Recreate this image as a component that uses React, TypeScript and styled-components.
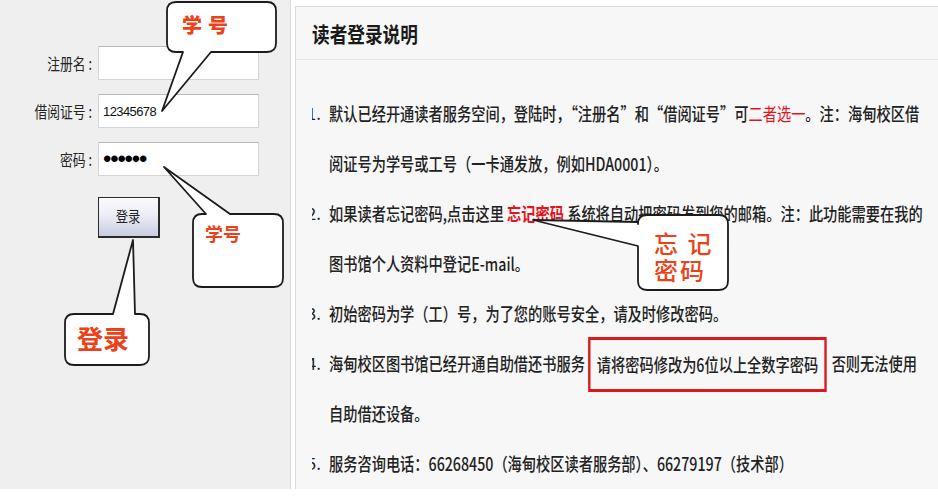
import React from 'react';
import styled, { createGlobalStyle, css } from 'styled-components';

const GlobalStyle = createGlobalStyle`
  html, body {
    margin: 0;
    padding: 0;
    background: #fff;
  }
  body {
    font-family: "Noto Sans CJK SC", "Noto Sans", sans-serif;
    color: #222;
  }
  * {
    box-sizing: border-box;
  }
`;

// the screenshot text is narrow and tall, so squeeze it a bit
const narrow = (origin: string, amount = 0.8) => css`
  display: inline-block;
  transform: scaleX(${amount});
  transform-origin: ${origin} center;
  white-space: nowrap;
`;

const Page = styled.div`
  position: relative;
  display: flex;
  align-items: flex-start;
  width: 938px;
  height: 496px;
  overflow: hidden;
  background: #fff;
`;

const LoginPanel = styled.div`
  flex: none;
  display: flex;
  flex-direction: column;
  width: 291px;
  height: 489px;
  padding-top: 46px;
  background: #efefef;
  border-right: 1px solid #dcdcdc;
`;

const Row = styled.div`
  display: grid;
  grid-template-columns: 92px 161px;
  column-gap: 6px;
  align-items: center;
  height: 34px;
  margin-bottom: 14px;
`;

const Label = styled.label`
  justify-self: end;
  font-size: 16px;
  color: #222;
  ${narrow('right', 0.8)}
`;

const Field = styled.input`
  width: 161px;
  height: 34px;
  padding: 0 4px;
  border: 1px solid #d4d4d4;
  border-top-color: #b8b8b8;
  background: #fff;
  font-family: "Liberation Sans", Arial, sans-serif;
  font-size: 13px;
  color: #111;
  outline: none;
  letter-spacing: -0.6px;

  &[type='password'] {
    font-size: 24px;
    letter-spacing: -1.2px;
    color: #000;
  }
`;

const ButtonRow = styled.div`
  display: flex;
  padding-left: 98px;
  margin-top: 7px;
`;

const LoginButton = styled.button`
  width: 62px;
  height: 41px;
  padding: 0 0 4px;
  border: 1px solid #2b2b2b;
  border-right-width: 2px;
  border-bottom-width: 2px;
  background: linear-gradient(#fbfbfd, #eceef5 45%, #c9cde0);
  font-family: "Noto Sans CJK SC", sans-serif;
  font-size: 15px;
  color: #222;

  span {
    ${narrow('center', 0.82)}
  }
`;

const Guide = styled.div`
  flex: 1;
  min-width: 0;
  height: 483px;
  margin: 6px 0 0 4px;
  overflow: hidden;
  background: #f7f7f7;
  border-top: 1px solid #dadada;
  border-left: 1px solid #dadada;
`;

const GuideHeader = styled.div`
  display: flex;
  align-items: center;
  height: 53px;
  padding-left: 16px;
  border-bottom: 1px solid #e6e6e6;
`;

const Title = styled.h2`
  margin: 0;
  font-size: 21px;
  font-weight: 700;
  color: #1a1a1a;
  ${narrow('left', 0.84)}
`;

const List = styled.ol`
  margin: 0;
  padding: 28px 0 0 16px;
  list-style: none;
`;

const Item = styled.li`
  display: flex;
  align-items: flex-start;
`;

const Marker = styled.span`
  flex: none;
  display: flex;
  justify-content: flex-end;
  width: 9px;
  height: 50px;
  margin-right: 8px;
  overflow: hidden;
  font-size: 17px;
  line-height: 50px;
  color: #222;
`;

const Lines = styled.div`
  display: flex;
  flex-direction: column;
`;

const Line = styled.div`
  height: 50px;
  font-size: 18px;
  font-weight: 500;
  line-height: 50px;
  color: #222;
  ${narrow('left', 0.79)}
`;

const Red = styled.span<{ $bold?: boolean }>`
  color: #e3141a;
  font-weight: ${(p) => (p.$bold ? 700 : 400)};
`;

const Boxed = styled.span`
  display: inline-block;
  height: 55px;
  margin: -1px 6px 0 4px;
  padding: 0 8px;
  border: 3px solid #d91a1f;
  line-height: 49px;
  vertical-align: top;
`;

/* ---------- callouts ---------- */

type Box = { x: number; y: number; w: number; h: number };
type Tail = { side: 'top' | 'bottom' | 'left'; a: number; b: number; tx: number; ty: number };

function bubblePath(box: Box, tail: Tail, ox: number, oy: number) {
  const r = 9;
  const x = box.x - ox;
  const y = box.y - oy;
  const { w, h } = box;
  const tx = tail.tx - ox;
  const ty = tail.ty - oy;
  const a = tail.side === 'left' ? tail.a - oy : tail.a - ox;
  const b = tail.side === 'left' ? tail.b - oy : tail.b - ox;

  let d = `M ${x + r} ${y} `;
  if (tail.side === 'top') d += `H ${a} L ${tx} ${ty} L ${b} ${y} `;
  d += `H ${x + w - r} Q ${x + w} ${y} ${x + w} ${y + r} V ${y + h - r} Q ${x + w} ${y + h} ${x + w - r} ${y + h} `;
  if (tail.side === 'bottom') d += `H ${b} L ${tx} ${ty} L ${a} ${y + h} `;
  d += `H ${x + r} Q ${x} ${y + h} ${x} ${y + h - r} `;
  if (tail.side === 'left') d += `V ${b} L ${tx} ${ty} L ${x} ${a} `;
  d += `V ${y + r} Q ${x} ${y} ${x + r} ${y} Z`;
  return d;
}

const Bubble = styled.div`
  position: absolute;
  pointer-events: none;

  svg {
    position: absolute;
    left: 0;
    top: 0;
    overflow: visible;
  }
`;

const BubbleText = styled.div<{ $size: number; $weight: number; $spacing?: number }>`
  position: absolute;
  font-family: "Noto Sans CJK SC", sans-serif;
  font-size: ${(p) => p.$size}px;
  font-weight: ${(p) => p.$weight};
  letter-spacing: ${(p) => p.$spacing ?? 0}px;
  line-height: ${(p) => Math.round(p.$size * 1.12)}px;
  color: #ec421a;
  white-space: nowrap;
`;

type CalloutProps = {
  box: Box;
  tail: Tail;
  textAt: [number, number];
  size: number;
  weight: number;
  spacing?: number;
  children: React.ReactNode;
};

const Callout: React.FC<CalloutProps> = ({ box, tail, textAt, size, weight, spacing, children }) => {
  const left = Math.min(box.x, tail.tx) - 2;
  const top = Math.min(box.y, tail.ty) - 2;
  const right = Math.max(box.x + box.w, tail.tx) + 2;
  const bottom = Math.max(box.y + box.h, tail.ty) + 2;
  const width = right - left;
  const height = bottom - top;

  return (
    <Bubble style={{ left, top, width, height }}>
      <svg width={width} height={height}>
        <path
          d={bubblePath(box, tail, left, top)}
          fill="#fff"
          stroke="#1c1c1c"
          strokeWidth={1.8}
          strokeLinejoin="round"
        />
      </svg>
      <BubbleText
        $size={size}
        $weight={weight}
        $spacing={spacing}
        style={{ left: box.x - left + textAt[0], top: box.y - top + textAt[1] }}
      >
        {children}
      </BubbleText>
    </Bubble>
  );
};

const App: React.FC = () => {
  return (
    <>
      <GlobalStyle />
      <Page>
        <LoginPanel>
          <Row>
            <Label>注册名 :</Label>
            <Field type="text" defaultValue="" />
          </Row>
          <Row>
            <Label>借阅证号 :</Label>
            <Field type="text" defaultValue="12345678" />
          </Row>
          <Row>
            <Label>密码 :</Label>
            <Field type="password" defaultValue="123456" />
          </Row>
          <ButtonRow>
            <LoginButton type="button">
              <span>登录</span>
            </LoginButton>
          </ButtonRow>
        </LoginPanel>

        <Guide>
          <GuideHeader>
            <Title>读者登录说明</Title>
          </GuideHeader>
          <List>
            <Item>
              <Marker>1.</Marker>
              <Lines>
                <Line>
                  默认已经开通读者服务空间，登陆时，“注册名”和“借阅证号”可<Red>二者选一</Red>。注：海甸校区借
                </Line>
                <Line>阅证号为学号或工号（一卡通发放，例如HDA0001）。</Line>
              </Lines>
            </Item>
            <Item>
              <Marker>2.</Marker>
              <Lines>
                <Line>
                  如果读者忘记密码,点击这里 <Red $bold>忘记密码</Red> 系统将自动把密码发到您的邮箱。注：此功能需要在我的
                </Line>
                <Line>图书馆个人资料中登记E-mail。</Line>
              </Lines>
            </Item>
            <Item>
              <Marker>3.</Marker>
              <Lines>
                <Line>初始密码为学（工）号，为了您的账号安全，请及时修改密码。</Line>
              </Lines>
            </Item>
            <Item>
              <Marker>4.</Marker>
              <Lines>
                <Line>
                  海甸校区图书馆已经开通自助借还书服务<Boxed>请将密码修改为6位以上全数字密码</Boxed>否则无法使用
                </Line>
                <Line>自助借还设备。</Line>
              </Lines>
            </Item>
            <Item>
              <Marker>5.</Marker>
              <Lines>
                <Line>服务咨询电话：66268450（海甸校区读者服务部）、66279197（技术部）</Line>
              </Lines>
            </Item>
          </List>
        </Guide>

        <Callout
          box={{ x: 167, y: 2, w: 109, h: 50 }}
          tail={{ side: 'bottom', a: 183, b: 211, tx: 162, ty: 111 }}
          textAt={[15, 12]}
          size={20}
          weight={900}
          spacing={6}
        >
          学号
        </Callout>
        <Callout
          box={{ x: 193, y: 214, w: 90, h: 73 }}
          tail={{ side: 'top', a: 206, b: 230, tx: 164, ty: 167 }}
          textAt={[12, 9]}
          size={18}
          weight={700}
        >
          学号
        </Callout>
        <Callout
          box={{ x: 65, y: 314, w: 84, h: 51 }}
          tail={{ side: 'top', a: 113, b: 135, tx: 133, ty: 240 }}
          textAt={[12, 9]}
          size={26}
          weight={700}
        >
          登录
        </Callout>
        <Callout
          box={{ x: 638, y: 215, w: 90, h: 75 }}
          tail={{ side: 'left', a: 222, b: 246, tx: 533, ty: 220 }}
          textAt={[16, 14]}
          size={24}
          weight={500}
          spacing={2}
        >
          忘 记
          <br />
          密码
        </Callout>
      </Page>
    </>
  );
};

export default App;
